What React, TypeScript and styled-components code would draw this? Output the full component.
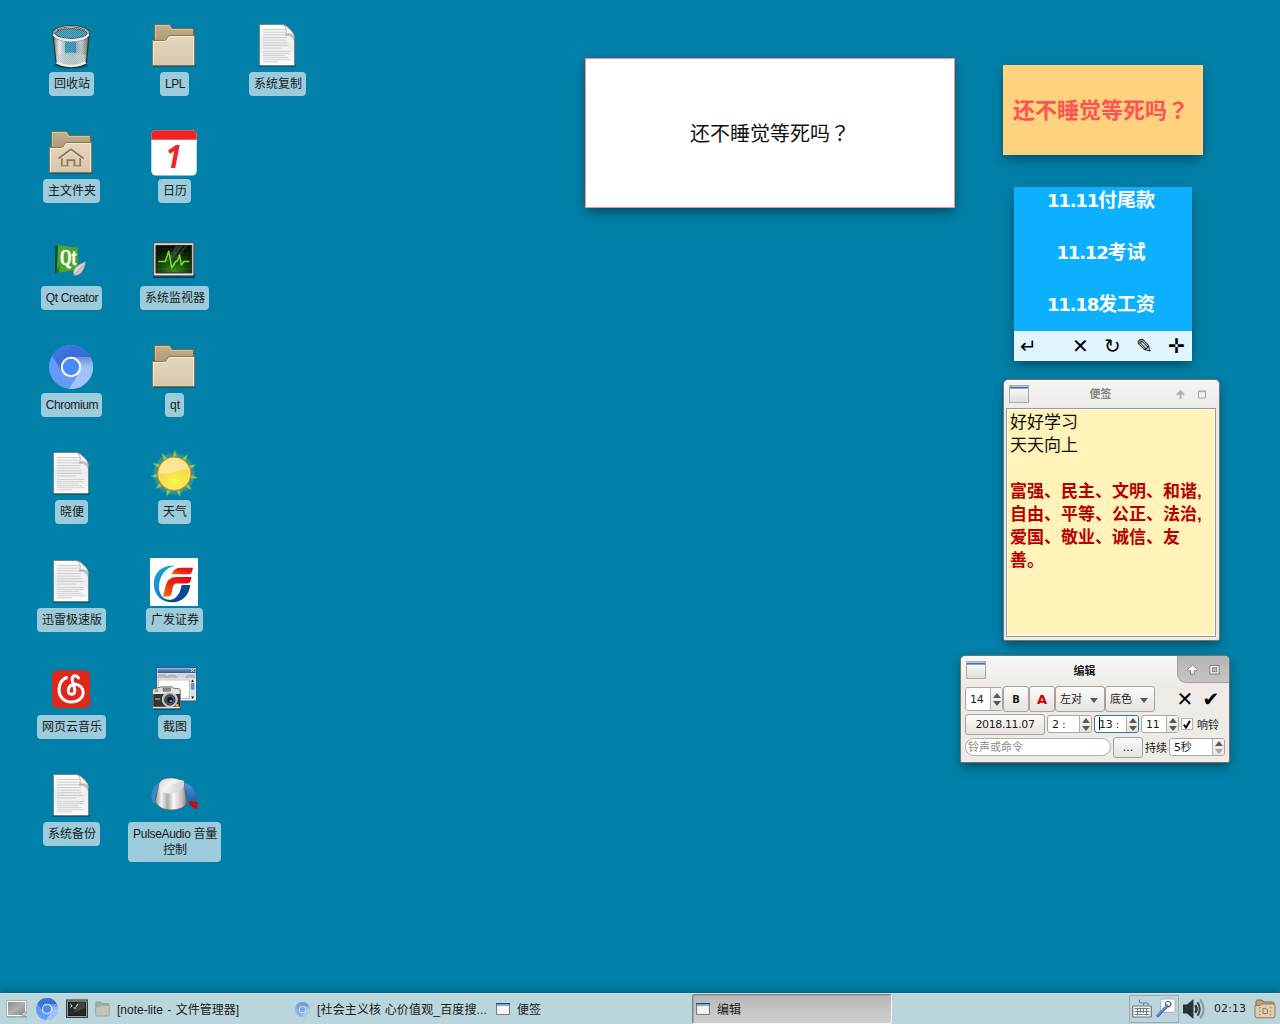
import React from "react";
import styled, { createGlobalStyle, css } from "styled-components";

const ui = `"Liberation Sans", "Noto Sans CJK SC", sans-serif`;
const digits = `"DejaVu Sans", "Noto Sans CJK SC", sans-serif`;

const GlobalStyle = createGlobalStyle`
  * { box-sizing: border-box; }
  html, body { margin: 0; padding: 0; overflow: hidden; }
  svg { display: block; flex: none; }
`;

const Desktop = styled.div`
  position: relative;
  width: 1280px;
  height: 1024px;
  display: flex;
  flex-direction: column;
  justify-content: space-between;
  background: #0180a9;
  font: 12px/16px ${ui};
  color: #1a1a1a;
  overflow: hidden;
`;

/* ---------- desktop icons ---------- */

const IconGrid = styled.div`
  display: grid;
  grid-auto-flow: column;
  grid-template-rows: repeat(4, 107px) 108px repeat(3, 107px);
  grid-auto-columns: 103px;
  padding: 22px 0 0 20px;
`;

const IconCell = styled.div`
  display: flex;
  flex-direction: column;
  align-items: center;
  gap: 2px;
  & > svg { margin-right: 1px; }
`;

const IconLabel = styled.div<{ $spacing?: number }>`
  padding: 4px 4px 4px 5px;
  border-radius: 4px;
  background: #9ccbdb;
  text-align: center;
  white-space: nowrap;
  letter-spacing: ${(p) => p.$spacing ?? 0}px;
`;

const Folder = ({ home }: { home?: boolean }) => (
  <svg width="48" height="48" viewBox="0 0 48 48">
    <defs>
      <linearGradient id="fFront" x1="0" y1="0" x2="0" y2="1"><stop offset="0" stopColor="#e6d6bf" /><stop offset="1" stopColor="#d8c6ab" /></linearGradient>
      <linearGradient id="fBack" x1="0" y1="0" x2="0" y2="1"><stop offset="0" stopColor="#c3b08e" /><stop offset="1" stopColor="#ad986f" /></linearGradient>
    </defs>
    <rect x="3" y="43" width="43" height="2" rx="1" fill="#00384a" opacity=".45" />
    <path d="M4.5 19V3.5Q4.5 2.5 5.5 2.5H18.5Q20 2.5 20.6 3.6L22.3 6.5H43.5V20H4.5Z" fill="url(#fBack)" stroke="#806a45" />
    <path d="M5.5 17V3.5H18.8L21.6 7.5H42.6" fill="none" stroke="#d8c9ab" strokeWidth=".8" />
    <path d="M2.5 18.5H14.5Q16 18.5 16.6 17L18 14.4Q18.6 13.5 20 13.5H44.5V43.5H2.5Z" fill="url(#fFront)" stroke="#907753" />
    <path d="M3.5 42.5V19.5H15Q16.8 19.5 17.5 17.6L18.8 15.2Q19.2 14.5 20.3 14.5H43.5V42.5" fill="none" stroke="#f5ebdc" strokeWidth=".9" />
    {home && (
      <g fill="none" stroke="#917850" strokeWidth="1.7">
        <path d="M11.5 29.5L24 20.3L36.5 29.5" strokeLinejoin="round" />
        <path d="M14.8 29V37H20.5V31.2H27.5V37H33.2V29" />
        <path d="M12 30.8L24 22L36 30.8" stroke="#f6ecdd" strokeWidth=".6" />
        <path d="M14 38H21.4M26.6 38H34" stroke="#f6ecdd" strokeWidth=".6" />
      </g>
    )}
  </svg>
);

const lineEnds = [33, 36, 35.5, 34, 33.5, 34.5, 35.5, 29];
const lowerEnds = [37, 36.5, 32, 35, 37.5, 25];
const Doc = () => (
  <svg width="48" height="48" viewBox="0 0 48 48">
    <defs><linearGradient id="doc" x1="0" y1="0" x2="0" y2="1"><stop offset="0" stopColor="#fff" /><stop offset=".5" stopColor="#ececec" /><stop offset="1" stopColor="#fafafa" /></linearGradient></defs>
    <rect x="5.5" y="42.5" width="37.5" height="2.5" rx="1.2" fill="#003446" opacity=".45" />
    <path d="M7.5 2.5H30Q34 3.5 37 7.5Q41 11 41.5 15V42.5Q41.5 43.5 40.5 43.5H7.5Q6.5 43.5 6.5 42.5V3.5Q6.5 2.5 7.5 2.5Z" fill="url(#doc)" stroke="#777d78" strokeWidth=".9" />
    {lineEnds.map((x, i) => <path key={i} d={`M10 ${7.5 + i * 2.65}H${i < 2 ? 32 : x}`} stroke="#c6c6c6" strokeWidth=".9" />)}
    {lowerEnds.map((x, i) => <path key={i} d={`M10 ${29.5 + i * 2.05}H${x}`} stroke="#c6c6c6" strokeWidth=".8" />)}
    <path d="M32 6Q33.5 9 32 14Q37.5 12.5 41 19V14Z" fill="#8b8b8b" opacity=".45" />
    <path d="M29.5 2.5Q34.5 5 33 12Q38.5 10.5 41.5 15.5Q41 11 37 7.5Q33.5 3.5 29.5 2.5Z" fill="#f6f6f6" stroke="#8d8d8d" strokeWidth=".5" />
  </svg>
);

const Trash = () => (
  <svg width="48" height="48" viewBox="0 0 48 48">
    <defs>
      <linearGradient id="can" x1="0" x2="1" y1="0" y2="0"><stop offset="0" stopColor="#5d6465" /><stop offset=".18" stopColor="#dfe3e3" /><stop offset=".36" stopColor="#7fabb9" /><stop offset=".58" stopColor="#5499b0" /><stop offset=".78" stopColor="#b4bdbf" /><stop offset="1" stopColor="#55595a" /></linearGradient>
      <pattern id="mesh" width="2" height="2" patternUnits="userSpaceOnUse"><path d="M0 0h1v1H0zM1 1h1v1H1z" fill="#fff" opacity=".28" /></pattern>
      <linearGradient id="rim" x1="0" x2="1" y1="0" y2="0"><stop offset="0" stopColor="#999" /><stop offset=".4" stopColor="#fff" /><stop offset="1" stopColor="#aaa" /></linearGradient>
    </defs>
    <ellipse cx="24" cy="43.5" rx="17" ry="3.2" fill="#003040" opacity=".5" />
    <path d="M5.8 12L9 40.5Q11 45.5 24 45.5Q37 45.5 39.5 40.5L42.2 12Z" fill="url(#can)" stroke="#2b3334" strokeWidth="1.1" />
    <path d="M18 17H29V33H18Z" fill="#087da5" opacity=".75" />
    <path d="M10 33Q24 28 39 33L38 40Q24 46 10 40Z" fill="#c0c4c4" opacity=".75" />
    <path d="M8 16Q24 23 40 16L38 41Q24 47 10 41Z" fill="url(#mesh)" />
    <path d="M9.5 40.5Q24 47.5 38.8 40.5" fill="none" stroke="#ececec" strokeWidth="2.4" />
    <ellipse cx="24" cy="11.5" rx="17.4" ry="6.4" fill="#2689a8" stroke="#30383a" strokeWidth="3.7" />
    <ellipse cx="24" cy="11.5" rx="17.4" ry="6.4" fill="url(#mesh)" stroke="url(#rim)" strokeWidth="2" />
    <path d="M6.5 12.5Q10 18.5 24 18.5Q38 18.5 41.5 12.5" fill="none" stroke="#e8e9e9" strokeWidth="2.4" />
    <path d="M10 8Q24 1.5 38 8" fill="none" stroke="#666" strokeWidth="1" />
  </svg>
);

const Calendar = () => (
  <svg width="48" height="48" viewBox="0 0 48 48">
    <rect x="1.3" y="1.3" width="45.4" height="45.3" rx="4.5" fill="#fff" />
    <path d="M1.3 10.8V5.8A4.5 4.5 0 0 1 5.8 1.3H42.2A4.5 4.5 0 0 1 46.7 5.8V10.8Z" fill="#f02427" />
    <text x="15.5" y="39.3" fontFamily="Noto Sans" fontSize="33" fontWeight="700" fontStyle="italic" fill="#f02427" textLength="16" lengthAdjust="spacingAndGlyphs">1</text>
  </svg>
);

const QtCreator = () => (
  <svg width="48" height="48" viewBox="0 0 48 48">
    <defs><linearGradient id="leaf" x1="0" y1="0" x2="1" y2="1"><stop offset="0" stopColor="#fff" /><stop offset="1" stopColor="#a9a9a9" /></linearGradient></defs>
    <path d="M8 9.7L13 9L12 36.5L8 37Z" fill="#07511e" />
    <path d="M11 9L26 11.2H30.8V29L26 34.5L9.8 36.8Z" fill="#51a52b" />
    <path d="M12.5 29V36.2L9.8 36.8V34Z" fill="#247a22" />
    <text x="13" y="29.3" fontFamily="Liberation Serif" fontSize="23" fontWeight="700" fill="#fff" stroke="#fff" strokeWidth=".5" textLength="16.5" lengthAdjust="spacingAndGlyphs">Qt</text>
    <path d="M38.8 25.5Q30 28.5 27 33.5Q26 36 26.6 39.4Q31 40.2 34.3 37Q37.5 33.5 38.8 25.5Z" fill="url(#leaf)" stroke="#777" strokeWidth=".6" />
    <path d="M27 39Q32 35 35.5 29.5" fill="none" stroke="#888" strokeWidth=".6" />
  </svg>
);

const Chromium = ({ size = 48, faded }: { size?: number; faded?: boolean }) => (
  <svg width={size} height={size} viewBox={size === 48 ? "0 0 48 48" : "2 2 44 44"} opacity={faded ? 0.55 : 1}>
    <defs>
      <linearGradient id="crTop" x1="0" y1="0" x2="1" y2="1"><stop offset="0" stopColor="#3f7be0" /><stop offset="1" stopColor="#3260cd" /></linearGradient>
      <linearGradient id="crShade" x1="0" y1="0" x2="0" y2="1"><stop offset="0" stopColor="#6b8fdb" /><stop offset=".35" stopColor="#a1c2fa" /></linearGradient>
    </defs>
    <circle cx="24" cy="24" r="22" fill="#659af6" />
    <path d="M43.6 14A22 22 0 0 1 22 45.9L32.7 29L24 14Z" fill="url(#crShade)" />
    <path d="M43.6 14A22 22 0 0 0 5 12.8L15.3 29L24 14Z" fill="url(#crTop)" />
    <circle cx="24" cy="24" r="10.2" fill="#fff" />
    <circle cx="24" cy="24" r="8.2" fill="#4a8af5" />
  </svg>
);

const Monitor = () => (
  <svg width="48" height="48" viewBox="0 0 48 48">
    <defs>
      <radialGradient id="mon" cx=".5" cy=".95" r=".8"><stop offset="0" stopColor="#3f8d18" /><stop offset=".55" stopColor="#16400b" /><stop offset="1" stopColor="#081307" /></radialGradient>
      <pattern id="monDots" width="4" height="4" patternUnits="userSpaceOnUse"><circle cx="1" cy="1" r=".45" fill="#5d8b46" /></pattern>
    </defs>
    <rect x="3" y="38.5" width="42" height="3.5" rx="1.5" fill="#002b3a" opacity=".8" />
    <rect x="3.6" y="6.6" width="40.3" height="33.3" rx="1" fill="#e6e5e5" stroke="#555" strokeWidth="1.2" />
    <rect x="6" y="9.4" width="35.7" height="27.5" fill="url(#mon)" stroke="#222" />
    <rect x="7" y="10" width="34" height="26" fill="url(#monDots)" />
    <path d="M26 10H33L22 24L15 26ZM35 10H37L28 22L25 23Z" fill="#fff" opacity=".15" />
    <path d="M8.3 25.5H15.3L18.7 15.2L21.7 31.8L26.2 25L27.5 25L29.7 19L31.3 29L34 25.5H39.3" fill="none" stroke="#78e02f" strokeWidth="1.5" strokeLinejoin="round" />
  </svg>
);

const Sun = () => (
  <svg width="48" height="48" viewBox="0 0 48 48">
    <defs>
      <radialGradient id="sun" cx=".5" cy=".75" r=".7"><stop offset="0" stopColor="#f5f755" /><stop offset="1" stopColor="#f8ca3a" /></radialGradient>
      <linearGradient id="sunGloss" x1="0" x2="0" y1="0" y2="1"><stop offset="0" stopColor="#fbe28e" /><stop offset="1" stopColor="#fbe99f" /></linearGradient>
    </defs>
    <circle cx="24.2" cy="23.8" r="20.8" fill="#8fc078" opacity=".3" />
    {Array.from({ length: 11 }, (_, i) => (
      <path key={i} d="M22.2 6.5L24.2 0L26.2 6.5Z" fill="#9cc65c" stroke="#57a468" strokeWidth=".4" transform={`rotate(${2 + i * 32.73} 24.2 23.8)`} />
    ))}
    <circle cx="24.2" cy="23.8" r="16.4" fill="url(#sun)" stroke="#ef8f12" strokeWidth="1.1" />
    <circle cx="24.2" cy="23.8" r="15.3" fill="none" stroke="#fdee8c" strokeWidth="1" />
    <path d="M9 22.8A15.3 15.3 0 0 1 39.3 20Q32 18.5 25 21.5Q17 25 9 22.8Z" fill="url(#sunGloss)" />
  </svg>
);

const Securities = () => (
  <svg width="48" height="48" viewBox="0 0 48 48">
    <defs>
      <linearGradient id="gfB" x1="0" y1="0" x2="1" y2="1"><stop offset="0" stopColor="#19a7e5" /><stop offset=".45" stopColor="#1389d1" /><stop offset=".7" stopColor="#034a92" /></linearGradient>
      <linearGradient id="gfR" x1="0" y1="1" x2="1" y2="0"><stop offset="0" stopColor="#f36f12" /><stop offset=".45" stopColor="#e52814" /><stop offset="1" stopColor="#e60013" /></linearGradient>
    </defs>
    <rect width="48" height="48" fill="#fff" />
    <path d="M25 8C12 6.5 3.7 15 3.8 26C4 37.5 12 44.4 22.5 44.3C33 44.2 39.5 36 40.2 27H31.6C30.5 35 26.5 41 21 41.8C13 42.5 8.5 36 9 27.5C9.7 17.5 16 9 25 8Z" fill="url(#gfB)" />
    <path d="M43 9.8L42 13.7Q41.4 16.2 38.8 16.2H21.5Q24 10.1 30 9.8Z" fill="url(#gfR)" />
    <path d="M41.5 19L40.7 22.8Q40 25.5 37.4 25.5H25.8Q23.4 25.8 22.6 30L21.6 35Q21 38.4 18.2 38.4H13L16 26.5Q18 19.4 26.5 19Z" fill="url(#gfR)" />
  </svg>
);

const CloudMusic = () => (
  <svg width="48" height="48" viewBox="0 0 48 48">
    <rect x="5" y="5.2" width="38" height="38" rx="5.5" fill="#dd291b" />
    <path d="M31.5 13C29.5 9.5 25 10 25.2 14.5C25.4 18 28 22 27.8 26C27.5 30.5 21 30.5 21.3 25.5C21.5 21 25 18.8 28.5 19.2C33 19.7 36.3 23.5 36.2 27.5C36 33 31 37 24.2 37C17 37 12 31.5 12 25C12 19 14.8 14.5 19.5 12.5" fill="none" stroke="#fff" strokeWidth="3" strokeLinecap="round" />
  </svg>
);

const Screenshot = () => (
  <svg width="48" height="48" viewBox="0 0 48 48">
    <defs><linearGradient id="shotT" x1="0" x2="0" y1="0" y2="1"><stop offset="0" stopColor="#7fa3cc" /><stop offset="1" stopColor="#2c568f" /></linearGradient></defs>
    <rect x="6.5" y="2.5" width="40" height="33.5" fill="#eceeef" stroke="#315992" />
    <rect x="7.5" y="3.3" width="38.2" height="4.8" fill="url(#shotT)" />
    <path d="M41.2 4.2L43.8 6.8M43.8 4.2L41.2 6.8" stroke="#fff" strokeWidth=".9" />
    <rect x="7.5" y="9" width="38.2" height="4.5" fill="#d2d5d5" />
    <path d="M8 13V11Q8 10 9.5 10H15Q16 10 16.5 13M17.5 13Q17.8 10.4 19 10.4H25Q26 10.4 26.5 13M36 13Q36.5 10.4 38 10.4H44L45 13" fill="#b9bdbd" stroke="#8d9191" strokeWidth=".6" />
    <rect x="8.5" y="15" width="31" height="18.5" fill="#fff" stroke="#aaa" strokeWidth=".7" />
    <rect x="40.8" y="14" width="3.7" height="20" fill="#dde" />
    <path d="M42.6 14.5L44 17H41.2ZM42.6 34L44 31.5H41.2Z" fill="#111" />
    <rect x="41.2" y="18" width="2.9" height="6.5" rx="1" fill="#6e99d0" stroke="#3a6aa8" strokeWidth=".5" />
    <rect x="3" y="43" width="28" height="2" rx="1" fill="#022" opacity=".5" />
    <path d="M2.5 26Q2.5 23.5 5 23.5L12 21.8H22L24 23.4H28Q30.3 23.4 30.3 26V43Q30.3 43.7 29.3 43.7H3.5Q2.5 43.7 2.5 43Z" fill="#e0e0de" stroke="#555" strokeWidth=".8" />
    <path d="M3.2 29H30V41.8H3.2Z" fill="#343434" />
    <rect x="13" y="23" width="7.5" height="3.3" fill="#888" stroke="#555" strokeWidth=".4" />
    <rect x="5" y="24.4" width="3.3" height="2.6" fill="#999" />
    <path d="M5 34H10" stroke="#ccc" strokeWidth="1" />
    <rect x="25.5" y="39" width="3" height="2.8" fill="#f0a020" />
    <circle cx="19.8" cy="34.5" r="7.5" fill="#b8b8b8" stroke="#eee" strokeWidth=".8" />
    <circle cx="19.8" cy="34.9" r="5.2" fill="#555" stroke="#333" />
    <circle cx="20" cy="35" r="3" fill="#0e1730" />
    <circle cx="20.8" cy="35.9" r="1.2" fill="#6c8fd4" />
  </svg>
);

const Volume = () => (
  <svg width="48" height="48" viewBox="0 0 48 48">
    <defs>
      <linearGradient id="knob" x1="0" x2="1" y1="0" y2="0"><stop offset="0" stopColor="#8d8d8d" /><stop offset=".2" stopColor="#f2f2f2" /><stop offset=".4" stopColor="#aaa" /><stop offset=".58" stopColor="#fafafa" /><stop offset=".85" stopColor="#c9bac4" /><stop offset="1" stopColor="#777" /></linearGradient>
      <linearGradient id="knobTop" x1="0" x2="1" y1="0" y2=".6"><stop offset="0" stopColor="#d6d6d6" /><stop offset=".5" stopColor="#f5f5f5" /><stop offset="1" stopColor="#cfcfcf" /></linearGradient>
      <linearGradient id="arcv" x1="0" x2="0" y1="0" y2="1"><stop offset="0" stopColor="#5a97d6" /><stop offset="1" stopColor="#2a5cab" /></linearGradient>
    </defs>
    <path d="M3 31Q-2 19 9 10L9 19Q4 23 5.5 31Z" fill="#3f86c4" />
    <path d="M33 10Q46 14 46.8 28.5L38 27.5Q38 19 33 15Z" fill="url(#arcv)" />
    <path d="M39 28.7L47.8 30.3L47 37.4Q42.5 35.8 39 32.2Z" fill="#cc0a0a" />
    <path d="M9.2 11.5Q11 6.2 20.5 6.2Q26 6 29 7.5L33.7 8.5L36.8 31Q33.5 38 20.5 38Q9.5 37.5 5 30Z" fill="url(#knob)" stroke="#655" strokeWidth=".6" />
    <path d="M9.4 12Q11 6.5 20.5 6.5Q26 6.3 29 8L33.6 8.8Q35 14 32 17.5Q27 21.5 20 21.8Q8 21 9.4 12Z" fill="url(#knobTop)" />
    <path d="M20 13Q27 12 33.5 9Q34 14 31 17Z" fill="#d0d0d0" opacity=".5" />
  </svg>
);

const desktopItems: { label: React.ReactNode; icon: React.ReactNode; spacing?: number }[] = [
  { label: "回收站", icon: <Trash /> },
  { label: "主文件夹", icon: <Folder home /> },
  { label: "Qt Creator", icon: <QtCreator />, spacing: -0.35 },
  { label: "Chromium", icon: <Chromium />, spacing: -0.35 },
  { label: "晓便", icon: <Doc /> },
  { label: "迅雷极速版", icon: <Doc /> },
  { label: "网页云音乐", icon: <CloudMusic /> },
  { label: "系统备份", icon: <Doc /> },
  { label: "LPL", icon: <Folder />, spacing: -0.4 },
  { label: "日历", icon: <Calendar /> },
  { label: "系统监视器", icon: <Monitor /> },
  { label: "qt", icon: <Folder /> },
  { label: "天气", icon: <Sun /> },
  { label: "广发证券", icon: <Securities /> },
  { label: "截图", icon: <Screenshot /> },
  { label: <>PulseAudio 音量<br />控制</>, icon: <Volume />, spacing: -0.33 },
  { label: "系统复制", icon: <Doc /> },
];

/* ---------- sticky notes ---------- */

const floating = css`
  position: absolute;
  box-shadow: 0 5px 12px -2px rgba(0, 20, 30, 0.55);
`;

const Wide = styled.span`
  font-family: "Noto Sans CJK TC", sans-serif;
`;

const PlainNote = styled.div`
  ${floating}
  left: 585px;
  top: 58px;
  width: 370px;
  height: 150px;
  border: 1px solid #ff8a80;
  background: #fff;
  display: flex;
  align-items: center;
  justify-content: center;
  font-size: 20px;
  color: #111;
`;

const OrangeNote = styled.div`
  ${floating}
  left: 1003px;
  top: 65px;
  width: 200px;
  height: 90px;
  padding: 0 4px 2px 0;
  background: #ffd27f;
  display: flex;
  align-items: center;
  justify-content: center;
  font-size: 22px;
  font-weight: 700;
  color: #ff5252;
  white-space: nowrap;
`;

const BlueNote = styled.div`
  ${floating}
  left: 1014px;
  top: 187px;
  width: 178px;
  height: 174px;
  background: #0db0ff;
  display: flex;
  flex-direction: column;
  justify-content: space-between;
`;

const Reminders = styled.div`
  display: flex;
  flex-direction: column;
  align-items: center;
  gap: 26px;
  padding-right: 4px;
  color: #fff;
  font: 700 19px/24px "Noto Sans CJK SC", sans-serif;
`;

const Reminder = styled.div`
  display: flex;
  align-items: baseline;
  height: 26px;
`;

const NoteNumber = styled.span`
  font: 700 18px/24px "DejaVu Sans", sans-serif;
  letter-spacing: -1.15px;
`;

const NoteTools = styled.div`
  display: flex;
  align-items: center;
  justify-content: flex-end;
  height: 30px;
  background: #e0f5ff;
  font: 20px/30px "DejaVu Sans", sans-serif;
  color: #000;
`;

const Tool = styled.span<{ $first?: boolean }>`
  width: 32px;
  padding-left: 1px;
  text-align: center;
  ${(p) => p.$first && "margin-right: auto; width: 28px;"}
`;

/* ---------- windows ---------- */

const NoteWindow = styled.div`
  ${floating}
  left: 1003px;
  top: 379px;
  width: 217px;
  height: 262px;
  padding: 0 3px 3px 2px;
  border: 1px solid #77736f;
  border-radius: 5px 5px 2px 2px;
  background: linear-gradient(#f5f5f4, #ecebea 28px);
  display: flex;
  flex-direction: column;
`;

const TitleBar = styled.div<{ $active?: boolean }>`
  display: flex;
  align-items: center;
  height: ${(p) => (p.$active ? 30 : 28)}px;
  flex: none;
  padding-left: ${(p) => (p.$active ? 5 : 3)}px;
  font: 700 11px/16px ${ui};
  color: ${(p) => (p.$active ? "#1c1c1c" : "#858583")};
  & > svg { margin-bottom: ${(p) => (p.$active ? 2 : 0)}px; }
`;

const Title = styled.div`
  flex: 1;
  padding: 0 0 1px 6px;
  text-align: center;
`;

const WindowButtons = styled.div<{ $active?: boolean }>`
  display: flex;
  align-items: center;
  justify-content: center;
  gap: 11px;
  width: ${(p) => (p.$active ? 52 : 50)}px;
  height: ${(p) => (p.$active ? 27 : 28)}px;
  ${(p) => p.$active && css`
    align-self: flex-start;
    padding-top: 1px;
    background: linear-gradient(#b5b5b4, #c4c4c3);
    border: solid #a1a09e;
    border-width: 0 0 1px 1px;
    border-radius: 0 4px 0 9px;
  `}
`;

const WindowIcon = () => (
  <svg width="20" height="18" viewBox="0 0 20 18">
    <defs><linearGradient id="win" x1="0" y1="0" x2="0" y2="1"><stop offset="0" stopColor="#fff" /><stop offset="1" stopColor="#dcddda" /></linearGradient></defs>
    <rect x=".5" y=".5" width="19" height="17" fill="url(#win)" stroke="#a8aaa6" />
    <rect x="1" y="1" width="18" height="1" fill="#b9c7dc" />
    <rect x="1" y="2" width="18" height="1.6" fill="#446fad" />
  </svg>
);

const UpArrow = ({ active }: { active?: boolean }) => (
  <svg width="11" height="11" viewBox="0 0 11 11">
    {active
      ? <path d="M5.5 .8L10.3 5.6L9.2 6.8H7.3V10.2H3.7V6.8H1.8L.7 5.6Z" fill="#fff" stroke="#737371" strokeWidth=".9" />
      : <path d="M5.5 10V3M2 6L5.5 2.3L9 6" fill="none" stroke="#b0b0ae" strokeWidth="2" />}
  </svg>
);

const Square = ({ active }: { active?: boolean }) => (
  <svg width="11" height="11" viewBox="0 0 11 11">
    {active ? (
      <>
        <rect x=".9" y="1.4" width="9.2" height="8.6" fill="#fff" stroke="#737371" strokeWidth=".9" />
        <rect x="3.3" y="3.8" width="4.5" height="4" fill="#bbb" stroke="#737371" strokeWidth=".9" />
      </>
    ) : (
      <path d="M1.5 2H8.5V9H1.5ZM1.5 2.7H8.5" fill="none" stroke="#a6a6a4" />
    )}
  </svg>
);

const Paper = styled.div`
  flex: 1;
  border: 1px solid #9b9994;
  outline: 1px solid #fff;
  outline-offset: -2px;
  padding: 2px 2px 0 3px;
  background: #fff3b9;
  font: 17px/23px ${ui};
  color: #111;
  white-space: pre-line;
`;

const Values = styled.div`
  margin-top: 23px;
  color: #b90000;
  font-weight: 700;
`;

const EditWindow = styled.div`
  ${floating}
  left: 960px;
  top: 655px;
  width: 270px;
  height: 108px;
  border: 1px solid #77736f;
  border-radius: 5px 5px 2px 2px;
  background: linear-gradient(#f7f7f6, #eeebe7 30px);
  font: 11px/16px ${digits};
`;

const Controls = styled.div`
  display: flex;
  flex-direction: column;
  gap: 2px;
  padding: 0 4px;
`;

const Row = styled.div<{ $h: number; $gap?: number }>`
  display: flex;
  align-items: center;
  gap: ${(p) => p.$gap ?? 0}px;
  height: ${(p) => p.$h}px;
  white-space: nowrap;
`;

const SpinBox = styled.div<{ $w: number; $h: number; $focus?: boolean }>`
  display: flex;
  flex: none;
  width: ${(p) => p.$w}px;
  height: ${(p) => p.$h}px;
  margin-bottom: ${(p) => (p.$h < 20 ? 1 : 0)}px;
  border: 1px solid ${(p) => (p.$focus ? "#2f76a8" : "#aaa69f")};
  border-radius: 3px;
  background: #fff;
  line-height: ${(p) => p.$h - 1}px;
  overflow: hidden;
`;

const SpinValue = styled.div`
  flex: 1;
  padding-left: 4px;
  letter-spacing: -0.3px;
`;

const Caret = styled.span`
  display: inline-block;
  width: 1px;
  height: 13px;
  vertical-align: -2px;
  margin-right: -1px;
  background: #000;
`;

const SpinArrows = styled.div`
  display: flex;
  flex-direction: column;
  align-items: center;
  justify-content: center;
  gap: 3px;
  width: 12px;
  border-left: 1px solid #b5b1aa;
  background: linear-gradient(#f8f7f6, #e6e3df);
`;

const Spin = ({ w, h, value, focus, dim }: { w: number; h: number; value: string; focus?: boolean; dim?: boolean }) => (
  <SpinBox $w={w} $h={h} $focus={focus}>
    <SpinValue>{focus && <Caret />}{value}</SpinValue>
    <SpinArrows>
      <svg width="8" height="5" viewBox="0 0 8 5"><path d="M0 5L4 0L8 5Z" fill="#5a5956" /></svg>
      <svg width="8" height="5" viewBox="0 0 8 5"><path d="M0 0L4 5L8 0Z" fill={dim ? "#aaa8a4" : "#5a5956"} /></svg>
    </SpinArrows>
  </SpinBox>
);

const Button = styled.div<{ $w: number; $color?: string; $spacing?: number }>`
  display: flex;
  flex: none;
  align-items: center;
  justify-content: center;
  width: ${(p) => p.$w}px;
  height: 100%;
  padding-top: 1px;
  border: 1px solid #a5a19b;
  border-radius: 3px;
  background: linear-gradient(#fbfbfa, #e5e2de);
  letter-spacing: ${(p) => p.$spacing ?? 0}px;
  color: ${(p) => p.$color ?? "#1a1a1a"};
`;

const Letter = styled.span<{ $size: number }>`
  font: 700 ${(p) => p.$size}px/16px "DejaVu Sans", sans-serif;
`;

const Combo = styled(Button)`
  justify-content: space-between;
  padding: 2px 6px 0 4px;
`;

const ComboArrow = () => (
  <svg width="8" height="5" viewBox="0 0 8 5"><path d="M0 0L4 5L8 0Z" fill="#5a5956" /></svg>
);

const Caption = styled.span<{ $left?: number }>`
  padding-top: 3px;
  margin-left: ${(p) => p.$left ?? 0}px;
`;

const Mark = styled.span<{ $left: number }>`
  width: 26px;
  margin-left: ${(p) => p.$left}px;
  text-align: center;
  font: 20px/26px "DejaVu Sans", sans-serif;
  color: #000;
`;

const CheckBox = styled.div`
  display: flex;
  align-items: center;
  justify-content: center;
  width: 12px;
  height: 12px;
  margin-bottom: 1px;
  border: 1px solid #b5b2ad;
  background: #fff;
  color: #000;
`;

const CheckMark = () => (
  <svg width="8" height="9" viewBox="0 0 8 9">
    <path d="M.8 4.6L3 7.6L7 .8" fill="none" stroke="#000" strokeWidth="1.9" />
  </svg>
);

const Entry = styled.div`
  width: 146px;
  height: 18px;
  margin-bottom: 1px;
  padding-left: 2px;
  border: 1px solid #b3afaa;
  border-radius: 9px;
  background: #fff;
  color: #8a8a88;
  line-height: 18px;
`;

/* ---------- taskbar ---------- */

const TaskBar = styled.div`
  display: flex;
  align-items: center;
  height: 31px;
  border-top: 1px solid #c9dfe5;
  box-shadow: 0 -3px 8px rgba(0, 30, 45, 0.3);
  background: #bbd5dc;
`;

const Launchers = styled.div`
  display: flex;
  align-items: center;
  gap: 8px;
  width: 92px;
  padding-left: 6px;
`;

const Task = styled.div<{ $active?: boolean; $word?: number; $spacing?: number }>`
  display: flex;
  flex: none;
  align-items: center;
  gap: 7px;
  width: 200px;
  height: 30px;
  padding-left: 2px;
  border: 1px solid transparent;
  white-space: nowrap;
  word-spacing: ${(p) => p.$word ?? 0}px;
  letter-spacing: ${(p) => p.$spacing ?? 0}px;
  ${(p) => p.$active && css`
    border-color: #858581;
    border-right-color: #f4f4f2;
    border-bottom-color: #f4f4f2;
    border-radius: 3px;
    background: linear-gradient(#b7b7b6, #d0d0cf);
    box-shadow: inset 1px 1px 1px #a4a4a2;
  `}
`;

const TaskText = styled.span`
  padding-top: 1px;
`;

const Tray = styled.div`
  display: flex;
  align-items: center;
  margin-left: auto;
  padding-right: 4px;
`;

const TrayBox = styled.div`
  display: flex;
  align-items: center;
  gap: 4px;
  width: 50px;
  height: 28px;
  margin-right: 3px;
  padding: 0 0 2px 2px;
  border: 1px solid #a3aaa8;
`;

const Clock = styled.div`
  width: 32px;
  margin: 0 8px;
  font: 11px/16px "DejaVu Sans", sans-serif;
  white-space: nowrap;
  letter-spacing: 0.1px;
`;

const ShowDesktop = () => (
  <svg width="22" height="20" viewBox="0 0 22 20">
    <defs><linearGradient id="sd" x1="0" y1="0" x2="1" y2="1"><stop offset="0" stopColor="#8e8e8b" /><stop offset=".5" stopColor="#b0b0ad" /><stop offset="1" stopColor="#898986" /></linearGradient></defs>
    <rect x="1" y="17" width="20" height="1.5" fill="#567" opacity=".5" />
    <path d="M.5 1.5H20.5V14L17.5 17.5H.5Z" fill="#fafafa" stroke="#9a9c9a" strokeWidth=".7" />
    <path d="M2 3H19V13L16 16H2Z" fill="url(#sd)" />
    <path d="M20.5 13L17 13.5L16.5 17.5Z" fill="#eee" stroke="#777" strokeWidth=".6" />
  </svg>
);

const Terminal = () => (
  <svg width="22" height="20" viewBox="0 0 22 20">
    <rect x=".6" y="1" width="20.8" height="17.4" fill="#aeb4b0" stroke="#353b38" strokeWidth="1.1" />
    <rect x="2" y="2.6" width="18" height="14.4" fill="#161d1b" />
    <path d="M3 5H19M3 7H19M3 9H19M3 11H19M3 13H19M3 15H19" stroke="#4d5753" strokeWidth=".5" />
    <path d="M11 3H19V9L8 14Z" fill="#fff" opacity=".13" />
    <path d="M4.2 5L6.2 6.8L4.2 8.4M7.4 9H10M12 5L9.8 8" fill="none" stroke="#fff" strokeWidth=".9" />
  </svg>
);

const SmallFolder = () => (
  <svg width="15" height="16" viewBox="0 0 17 16" preserveAspectRatio="none" opacity=".9">
    <path d="M1 6V1.8Q1 1 1.8 1H6.2L7.6 2.5H15.5V6Z" fill="#a9a78e" stroke="#98967f" />
    <path d="M.7 5.8H5.5L6.7 4.3H16.2V13.5Q16.2 15 14.8 15H2.2Q.7 15 .7 13.5Z" fill="#c3c4b7" stroke="#a2a192" />
  </svg>
);

const SmallWindow = ({ active }: { active?: boolean }) => (
  <svg width="15" height="12" viewBox="-1 0 15 12">
    <rect x=".5" y=".5" width="13" height="11" fill={active ? "#e4e4e2" : "#e8eae8"} stroke="#7d807e" />
    <rect x="0" y="0" width="14" height="1.3" fill="#1f4585" />
    <rect x="1" y="1.3" width="12" height="1.4" fill="#6e97d2" />
    <rect x="2" y="3.4" width="10" height="7" fill="#fff" opacity=".6" />
  </svg>
);

const Keyboard = () => (
  <svg width="20" height="20" viewBox="0 0 20 20">
    <path d="M11.5 7.5V5.5Q11.5 4.8 10.5 4.8H8.2Q7.5 4.8 7.5 4V1.5M11.5 5H15.5Q16.3 5 16.3 5.8V7.5" fill="none" stroke="#6e7b7d" strokeWidth="1" />
    <rect x=".7" y="8" width="18.6" height="11" rx="1" fill="#f4f5f5" stroke="#6d7779" strokeWidth="1.2" />
    <path d="M2.5 10.5H17.5M2.5 13.5H17.5M2.5 16.5H17.5M5.5 9.8V17.5M8.5 9.8V15M11.5 9.8V15M14.5 9.8V17.5" stroke="#69757a" strokeWidth=".9" />
  </svg>
);

const InputTool = () => (
  <svg width="20" height="20" viewBox="0 0 20 20">
    <rect x="4.5" y="1" width="14.5" height="13.3" rx="1.5" fill="#fafafa" stroke="#aab5bb" />
    <circle cx="12" cy="6" r="2.7" fill="#fff" stroke="#4d5b6b" />
    <path d="M14.5 4Q16.5 8 12.5 9.5" fill="none" stroke="#777" strokeWidth=".8" />
    <path d="M12 7L1 18.5" stroke="#315d9e" strokeWidth="2.7" />
    <path d="M11.5 7L1 18" stroke="#79a3dc" strokeWidth="1.1" />
  </svg>
);

const Speaker = () => (
  <svg width="24" height="24" viewBox="0 0 24 24">
    <path d="M1 7.5H5L11.5 2V22L5 16.5H1Z" fill="#273136" />
    <path d="M13.2 8.2Q16 12 13.2 15.8" fill="none" stroke="#273136" strokeWidth="2.4" />
    <path d="M15.5 5.2Q20 12 15.5 18.8" fill="none" stroke="#39464c" strokeWidth="2" />
    <path d="M18.2 2.5Q25.2 12 18.2 21.5" fill="none" stroke="#879ba2" strokeWidth="2" />
  </svg>
);

const TrayFolder = () => (
  <svg width="22" height="20" viewBox="0 0 22 20">
    <path d="M2 7V2.5Q2 1 3.5 1H8L10 3H18.5Q20 3 20 4.5V8Z" fill="#b7a27d" stroke="#83704c" />
    <path d="M1 6.5H6L7.5 5H19.5Q21 5 21 6.5V16.5Q21 18.8 18.8 18.8H3.2Q1 18.8 1 16.5Z" fill="#dfccaf" stroke="#957b54" />
    <path d="M9 9.5H12.2L13.5 11V14.5H9Z" fill="none" stroke="#927a53" />
    <path d="M5.8 8V9.3M5.8 11.5V12.8M5.8 15V16.3M16.6 8V9.3M16.6 11.5V12.8M16.6 15V16.3" stroke="#927a53" />
  </svg>
);

export default function App() {
  return (
    <Desktop>
      <GlobalStyle />
      <IconGrid>
        {desktopItems.map((item, i) => (
          <IconCell key={i}>
            {item.icon}
            <IconLabel $spacing={item.spacing}>{item.label}</IconLabel>
          </IconCell>
        ))}
      </IconGrid>

      <PlainNote><span>还不睡觉等死吗<Wide>？</Wide></span></PlainNote>
      <OrangeNote><span>还不睡觉等死吗<Wide>？</Wide></span></OrangeNote>

      <BlueNote>
        <Reminders>
          <Reminder><NoteNumber>11.11</NoteNumber>付尾款</Reminder>
          <Reminder><NoteNumber>11.12</NoteNumber>考试</Reminder>
          <Reminder><NoteNumber>11.18</NoteNumber>发工资</Reminder>
        </Reminders>
        <NoteTools>
          <Tool $first>↵</Tool>
          <Tool>✕</Tool>
          <Tool>↻</Tool>
          <Tool>✎</Tool>
          <Tool>✛</Tool>
        </NoteTools>
      </BlueNote>

      <NoteWindow>
        <TitleBar>
          <WindowIcon />
          <Title>便签</Title>
          <WindowButtons><UpArrow /><Square /></WindowButtons>
        </TitleBar>
        <Paper>
          {"好好学习\n天天向上"}
          <Values>{"富强、民主、文明、和谐,\n自由、平等、公正、法治,\n爱国、敬业、诚信、友\n善。"}</Values>
        </Paper>
      </NoteWindow>

      <EditWindow>
        <TitleBar $active>
          <WindowIcon />
          <Title>编辑</Title>
          <WindowButtons $active><UpArrow active /><Square active /></WindowButtons>
        </TitleBar>
        <Controls>
          <Row $h={26}>
            <Spin w={38} h={24} value="14" />
            <Button $w={26}><Letter $size={10}>B</Letter></Button>
            <Button $w={26} $color="#cb0000"><Letter $size={13}>A</Letter></Button>
            <Combo $w={50}>左对<ComboArrow /></Combo>
            <Combo $w={50}>底色<ComboArrow /></Combo>
            <Mark $left={17}>✕</Mark>
            <Mark $left={0}>✔</Mark>
          </Row>
          <Row $h={21} $gap={2}>
            <Button $w={80} $spacing={-0.4}>2018.11.07</Button>
            <Spin w={45} h={18} value="2 :" />
            <Spin w={45} h={18} value="13 :" focus />
            <Spin w={38} h={18} value="11" />
            <CheckBox><CheckMark /></CheckBox>
            <Caption $left={2}>响铃</Caption>
          </Row>
          <Row $h={21} $gap={2}>
            <Entry>铃声或命令</Entry>
            <Button $w={30}>...</Button>
            <Caption>持续</Caption>
            <Spin w={56} h={18} value="5秒" dim />
          </Row>
        </Controls>
      </EditWindow>

      <TaskBar>
        <Launchers>
          <ShowDesktop />
          <Chromium size={22} />
          <Terminal />
        </Launchers>
        <Task $word={1}><SmallFolder /><TaskText>[note-lite - 文件管理器]</TaskText></Task>
        <Task $spacing={0.15}><Chromium size={15} faded /><TaskText>[社会主义核 心价值观_百度搜...</TaskText></Task>
        <Task><SmallWindow /><TaskText>便签</TaskText></Task>
        <Task $active><SmallWindow active /><TaskText>编辑</TaskText></Task>
        <Tray>
          <TrayBox><Keyboard /><InputTool /></TrayBox>
          <Speaker />
          <Clock>02:13</Clock>
          <TrayFolder />
        </Tray>
      </TaskBar>
    </Desktop>
  );
}
